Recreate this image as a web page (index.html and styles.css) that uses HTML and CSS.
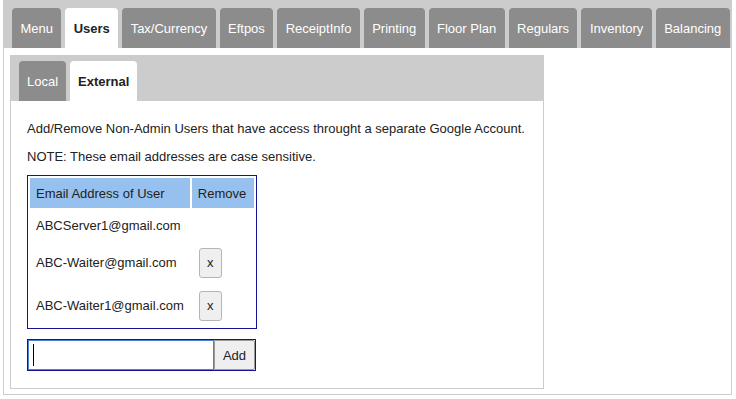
FILE: index.html
```html
<!DOCTYPE html>
<html>
<head>
<meta charset="utf-8">
<link rel="stylesheet" href="styles.css">
</head>
<body>
<div class="tabs">
  <ul class="tabbar main">
    <li class="tab">Menu</li>
    <li class="tab active">Users</li>
    <li class="tab">Tax/Currency</li>
    <li class="tab">Eftpos</li>
    <li class="tab">ReceiptInfo</li>
    <li class="tab">Printing</li>
    <li class="tab">Floor Plan</li>
    <li class="tab">Regulars</li>
    <li class="tab">Inventory</li>
    <li class="tab">Balancing</li>
  </ul>
  <div class="panel">
    <div class="subtabs">
      <ul class="tabbar sub">
        <li class="tab">Local</li>
        <li class="tab active">External</li>
      </ul>
      <div class="subpanel">
        <p>Add/Remove Non-Admin Users that have access throught a separate Google Account.</p>
        <p class="note">NOTE: These email addresses are case sensitive.</p>
        <table class="users">
          <tr class="head"><th class="c-email">Email Address of User</th><th class="c-remove">Remove</th></tr>
          <tr class="row-plain"><td>ABCServer1@gmail.com</td><td class="c-remove"></td></tr>
          <tr class="row-btn"><td>ABC-Waiter@gmail.com</td><td class="c-remove"><button class="xbtn">x</button></td></tr>
          <tr class="row-btn"><td>ABC-Waiter1@gmail.com</td><td class="c-remove"><button class="xbtn">x</button></td></tr>
        </table>
        <div class="addrow">
          <span class="field"><input class="email-input" type="text"><span class="caret"></span></span>
          <button class="addbtn">Add</button>
        </div>
      </div>
    </div>
  </div>
</div>
</body>
</html>
```

FILE: styles.css
```css
html, body {
  margin: 0;
  padding: 0;
  background: #fff;
}
body {
  font-family: "Liberation Sans", Arial, sans-serif;
  font-size: 13px;
  color: #222;
}
.tabs {
  margin: 0 0 0 3px;
  width: 727px;
  border: 1px solid #ccc;
}
.tabbar {
  list-style: none;
  margin: 0;
  display: flex;
  gap: 4px;
  background: #ccc;
}
.tabbar.main {
  padding: 7px 8px 0 8px;
}
.tab {
  box-sizing: border-box;
  height: 40px;
  line-height: 39px;
  padding: 1px 8.4px 0 8.4px;
  background: #8c8c8c;
  color: #fff;
  border-radius: 4px 4px 0 0;
  white-space: nowrap;
}
.tab.active {
  background: #fff;
  color: #222;
  font-weight: bold;
}
.panel {
  padding: 7px 6px 5px 6px;
}
.subtabs {
  width: 532px;
  border: 1px solid #ccc;
}
.tabbar.sub {
  padding: 5px 8px 0 8px;
}
.tabbar.sub .tab {
  padding: 1px 8px 0 8px;
}
.subpanel {
  padding: 7px 16px 17px 16px;
}
.subpanel p {
  margin: 13px 0;
  line-height: 15px;
}
.subpanel p.note {
  margin-bottom: 11px;
}
.users {
  border: 1px solid #14148f;
  border-spacing: 2px;
  font-size: 13px;
}
.users th {
  background: #96c1ef;
  font-weight: normal;
  text-align: left;
  height: 30px;
  padding: 0 6px;
  box-sizing: border-box;
}
.users td {
  padding: 0 6px;
  white-space: nowrap;
}
.c-email {
  width: 148px;
}
.c-remove {
  width: 48px;
}
.users td.c-remove {
  padding-left: 7px;
  padding-right: 7px;
}
.row-plain td {
  height: 30px;
}
.row-btn td {
  height: 41px;
}
.xbtn {
  width: 23px;
  height: 30px;
  padding: 0;
  margin: 0;
  font-family: "Liberation Sans", Arial, sans-serif;
  font-size: 13px;
  color: #222;
  background: #efefef;
  border: 1px solid #b5b5b5;
  border-radius: 3px;
  display: block;
}
.addrow {
  margin-top: 10px;
  display: inline-flex;
  border: 1px solid #14148f;
}
.field {
  position: relative;
  display: block;
}
.email-input {
  display: block;
  box-sizing: border-box;
  width: 186px;
  height: 30px;
  margin: 0;
  border: 1px solid #4d7fd8;
  outline: none;
  padding: 0 4px;
  font-family: "Liberation Sans", Arial, sans-serif;
  font-size: 13px;
  caret-color: transparent;
}
.caret {
  position: absolute;
  left: 5px;
  top: 4px;
  width: 1px;
  height: 22px;
  background: #000;
}
.addbtn {
  box-sizing: border-box;
  width: 41px;
  height: 30px;
  margin: 0;
  padding: 0;
  font-family: "Liberation Sans", Arial, sans-serif;
  font-size: 13px;
  color: #222;
  background: #efefef;
  border: 1px solid #9a9a9a;
  border-radius: 0 2px 2px 0;
}
```
